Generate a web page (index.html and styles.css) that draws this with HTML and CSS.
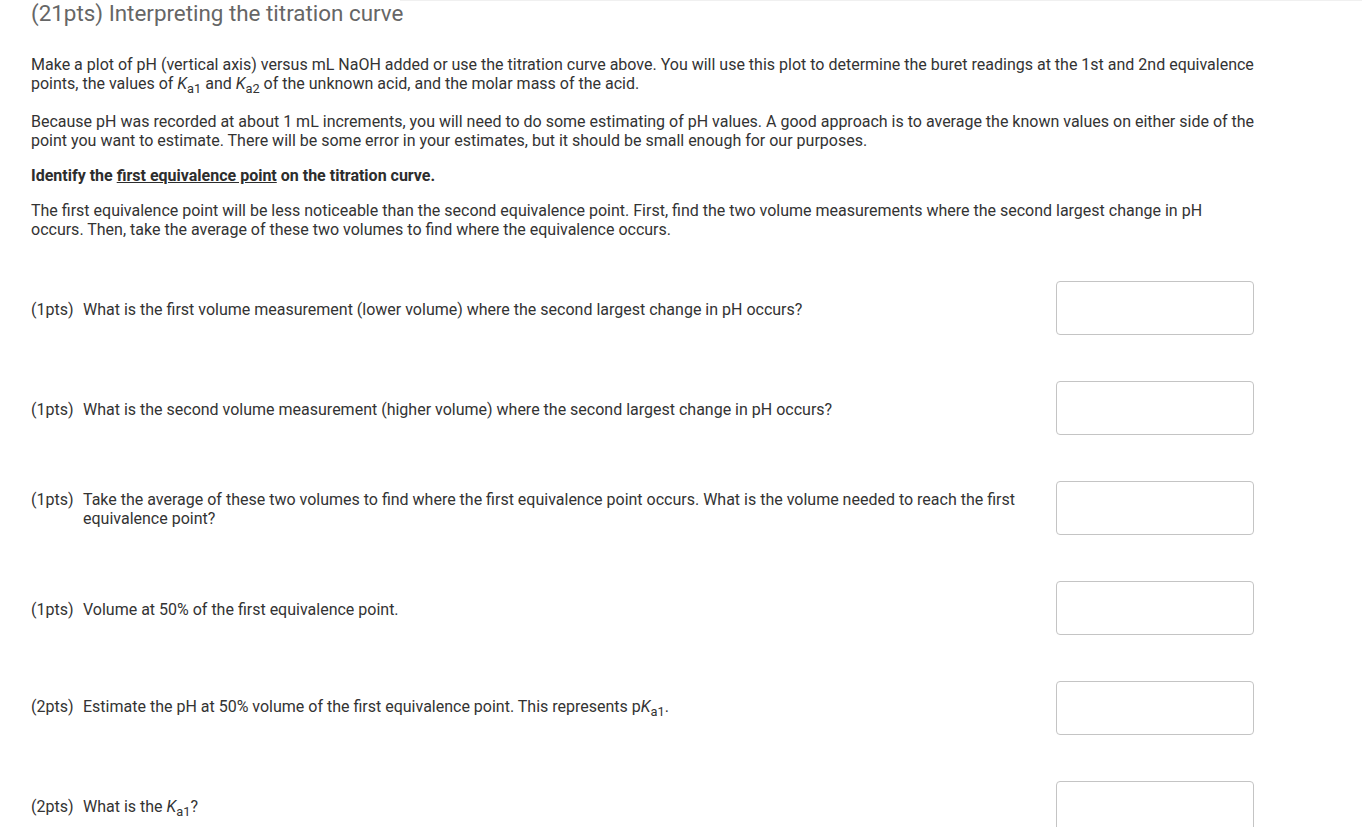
FILE: index.html
```html
<!DOCTYPE html>
<html>
<head>
<meta charset="utf-8">
<link rel="stylesheet" href="styles.css">
</head>
<body>
<div class="topline"></div>
<div class="page">
  <h1 class="title">(21pts) Interpreting the titration curve</h1>
  <p class="para p1">Make a plot of pH (vertical axis) versus mL NaOH added or use the titration curve above. You will use this plot to determine the buret readings at the 1st and 2nd equivalence points, the values of <i>K</i><sub>a1</sub> and <i>K</i><sub>a2</sub> of the unknown acid, and the molar mass of the acid.</p>
  <p class="para p2">Because pH was recorded at about 1 mL increments, you will need to do some estimating of pH values. A good approach is to average the known values on either side of the point you want to estimate. There will be some error in your estimates, but it should be small enough for our purposes.</p>
  <p class="para bold">Identify the <u>first equivalence point</u> on the titration curve.</p>
  <p class="para p4">The first equivalence point will be less noticeable than the second equivalence point. First, find the two volume measurements where the second largest change in pH occurs. Then, take the average of these two volumes to find where the equivalence occurs.</p>

  <div class="questions">
    <div class="q">
      <div class="qbody">
        <span class="pts">(1pts)</span>
        <span class="qtext">What is the first volume measurement (lower volume) where the second largest change in pH occurs?</span>
      </div>
      <div class="box"></div>
    </div>
    <div class="q">
      <div class="qbody">
        <span class="pts">(1pts)</span>
        <span class="qtext">What is the second volume measurement (higher volume) where the second largest change in pH occurs?</span>
      </div>
      <div class="box"></div>
    </div>
    <div class="q">
      <div class="qbody">
        <span class="pts">(1pts)</span>
        <span class="qtext">Take the average of these two volumes to find where the first equivalence point occurs. What is the volume needed to reach the first equivalence point?</span>
      </div>
      <div class="box"></div>
    </div>
    <div class="q">
      <div class="qbody">
        <span class="pts">(1pts)</span>
        <span class="qtext">Volume at 50% of the first equivalence point.</span>
      </div>
      <div class="box"></div>
    </div>
    <div class="q">
      <div class="qbody">
        <span class="pts">(2pts)</span>
        <span class="qtext">Estimate the pH at 50% volume of the first equivalence point. This represents p<i>K</i><sub>a1</sub>.</span>
      </div>
      <div class="box"></div>
    </div>
    <div class="q">
      <div class="qbody">
        <span class="pts">(2pts)</span>
        <span class="qtext">What is the <i>K</i><sub>a1</sub>?</span>
      </div>
      <div class="box"></div>
    </div>
  </div>
</div>
</body>
</html>
```
FILE: styles.css
```css
html, body {
  margin: 0;
  padding: 0;
  background: #fff;
}
body {
  font-family: Roboto, "Liberation Sans", sans-serif;
  color: #333;
  font-size: 16px;
  line-height: 19px;
}
.topline {
  height: 1px;
  margin-left: 400px;
  background: #f0f0f0;
}
.page {
  padding-left: 31px;
  width: 1224px;
}
.title {
  margin: -1px 0 0 0;
  font-size: 22.4px;
  font-weight: 400;
  line-height: 26px;
  color: #666;
}
.para {
  margin: 0;
}
.p1 { margin-top: 29px; }
.p2 { margin-top: 19px; }
.bold { margin-top: 16px; font-weight: 700; color: #2d2d2d; }
.p4 { margin-top: 16px; }
i { font-style: italic; }
sub {
  font-size: 0.8em;
  line-height: 0;
  vertical-align: -0.3em;
}
.qtext sub {
  line-height: 19px;
}
.questions {
  margin-top: 42px;
  display: flex;
  flex-direction: column;
  gap: 46px;
}
.q {
  display: flex;
  align-items: center;
  height: 54px;
}
.qbody {
  display: flex;
  align-items: flex-start;
  width: 1025px;
  flex: none;
  padding-top: 2px;
}
.pts {
  width: 52px;
  flex: none;
}
.qtext {
  width: 943px;
  flex: none;
}
.box {
  width: 196px;
  height: 52px;
  border: 1px solid #c4c4c4;
  border-radius: 4px;
  flex: none;
}
```
